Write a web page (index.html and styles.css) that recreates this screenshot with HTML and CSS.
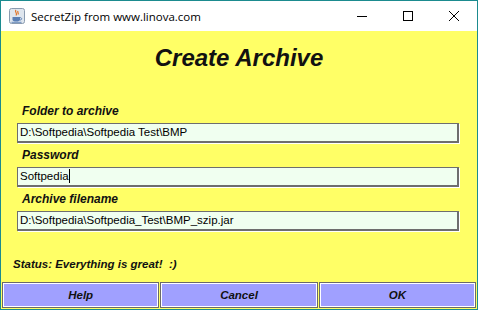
FILE: index.html
```html
<!DOCTYPE html>
<html lang="en">
<head>
  <meta charset="UTF-8">
  <title>SecretZip from www.linova.com</title>
  <link rel="stylesheet" href="styles.css">
</head>
<body>
  <div class="window">
    <div class="titlebar">
      <svg class="app-icon" width="16" height="16" viewBox="0 0 16 16">
        <rect x="0.5" y="0.5" width="15" height="15" rx="2" fill="#dfe6ee" stroke="#8a9bb0"/>
        <path d="M7 2 C5 4 9 5 7 7.5 M9 3 C8 4.5 10 5 9 6.5" stroke="#e07020" stroke-width="1.2" fill="none"/>
        <path d="M3.5 9 H11 V11.5 C11 13 9.5 13.5 7.2 13.5 C5 13.5 3.5 13 3.5 11.5 Z" fill="#5a7fb5"/>
        <path d="M11 9.6 C13.2 9.6 13.2 12 11 12" stroke="#5a7fb5" stroke-width="1" fill="none"/>
        <path d="M2.5 14.3 H12.5" stroke="#5a7fb5" stroke-width="0.9"/>
      </svg>
      <span class="title-text">SecretZip from www.linova.com</span>
      <div class="controls">
        <span class="ctl"><svg width="10" height="10" viewBox="0 0 10 10"><path d="M0 5.5 H10" stroke="#000" stroke-width="1"/></svg></span>
        <span class="ctl"><svg width="10" height="10" viewBox="0 0 10 10"><rect x="0.5" y="0.5" width="9" height="9" fill="none" stroke="#000" stroke-width="1"/></svg></span>
        <span class="ctl"><svg width="10" height="10" viewBox="0 0 10 10"><path d="M0 0 L10 10 M10 0 L0 10" stroke="#000" stroke-width="1"/></svg></span>
      </div>
    </div>

    <div class="content">
      <h1>Create Archive</h1>

      <div class="form">
        <label>Folder to archive</label>
        <div class="field">D:\Softpedia\Softpedia Test\BMP</div>

        <label>Password</label>
        <div class="field">Softpedia<span class="caret"></span></div>

        <label>Archive filename</label>
        <div class="field">D:\Softpedia\Softpedia_Test\BMP_szip.jar</div>
      </div>

      <div class="status">Status: Everything is great!&nbsp; :)</div>
    </div>

    <div class="buttons">
      <button>Help</button>
      <button>Cancel</button>
      <button>OK</button>
    </div>
  </div>
</body>
</html>
```

FILE: styles.css
```css
* { box-sizing: border-box; }
body { margin: 0; font-family: 'Liberation Sans', Arial, sans-serif; }

.window {
  width: 478px;
  height: 310px;
  border: 1px solid #1b8b8f;
  background: #ffff66;
  display: flex;
  flex-direction: column;
}

.titlebar {
  height: 30px;
  background: #fff;
  display: flex;
  align-items: center;
  padding-left: 8px;
}
.app-icon { margin-right: 6px; }
.title-text {
  font-family: 'Open Sans', 'Noto Sans', sans-serif;
  font-size: 11.5px;
  color: #000;
}
.controls {
  margin-left: auto;
  display: flex;
}
.ctl {
  width: 46px;
  height: 30px;
  display: flex;
  align-items: center;
  justify-content: center;
}

.content {
  flex: 1;
  padding: 12px 16px 0 16px;
}
h1 {
  margin: 0;
  text-align: center;
  font-size: 24px;
  font-style: italic;
  font-weight: bold;
  color: #111;
  height: 36px;
  line-height: 30px;
}

.form {
  display: flex;
  flex-direction: column;
  margin-top: 20px;
}
label {
  font-size: 12px;
  font-weight: bold;
  font-style: italic;
  color: #111;
  height: 24px;
  line-height: 16px;
  padding-top: 4px;
  padding-left: 5px;
}
.field {
  height: 20px;
  margin-right: 2px;
  background: #f0fff0;
  border-style: solid;
  border-color: #6e6e6e;
  border-width: 1px 2px 2px 1px;
  box-shadow: 1px 1px 0 #fff;
  font-size: 11.5px;
  line-height: 17px;
  padding-left: 2px;
  color: #000;
}
.caret {
  display: inline-block;
  width: 1px;
  height: 14px;
  background: #000;
  vertical-align: -3px;
}

.status {
  margin-top: 27px;
  margin-left: -4px;
  font-size: 11.5px;
  font-weight: bold;
  font-style: italic;
  color: #111;
}

.buttons {
  display: flex;
  gap: 1px;
  padding: 0 1px 1px 1px;
  height: 27px;
}
button {
  flex: 1;
  background: #a0a0ff;
  border: 1px solid #6a6a6a;
  box-shadow: inset 1px 1px 0 #fff, inset -1px -1px 0 #fff;
  font-family: 'Liberation Sans', Arial, sans-serif;
  font-size: 11.5px;
  font-weight: bold;
  font-style: italic;
  color: #111;
  padding: 0;
}
```
